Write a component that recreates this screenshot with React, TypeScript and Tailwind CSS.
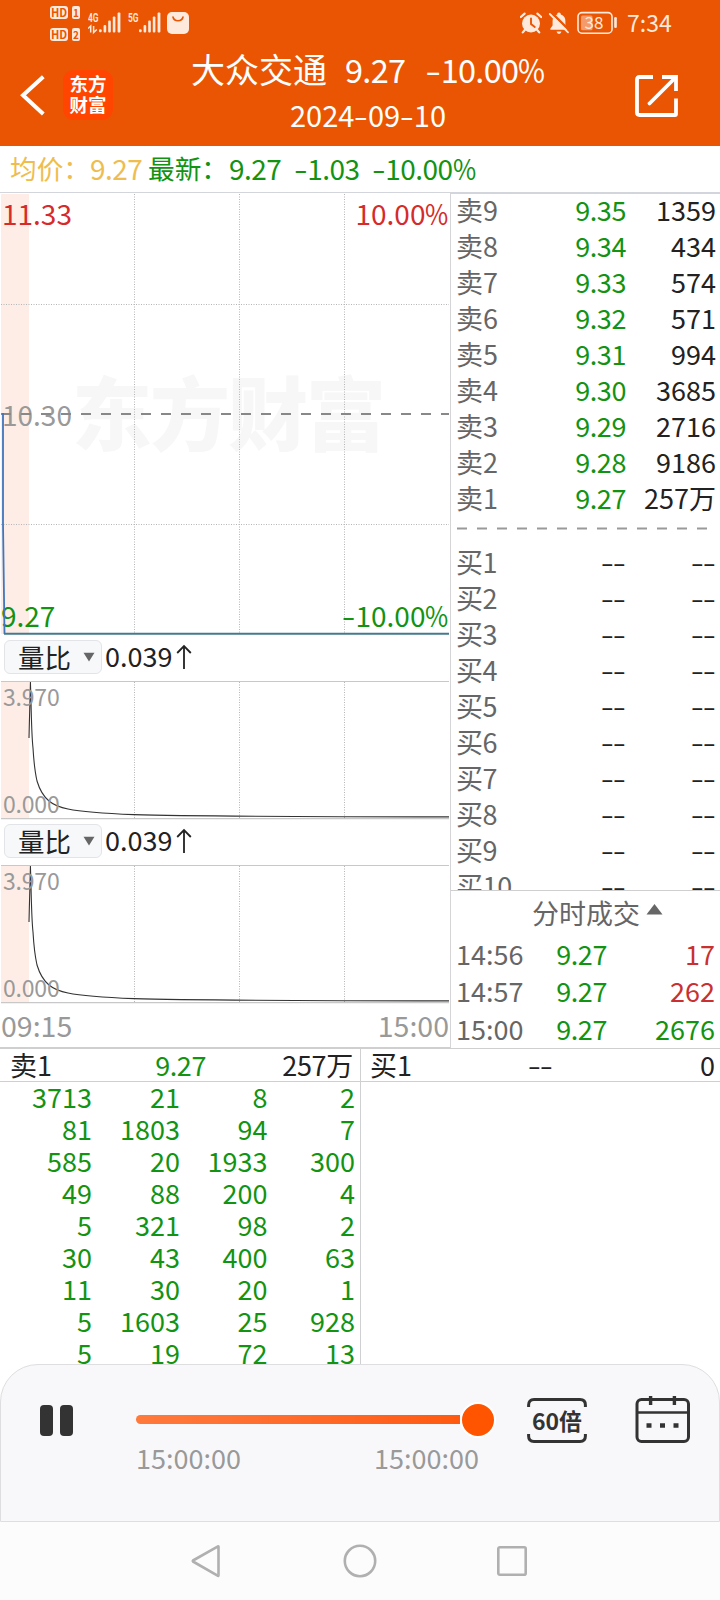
import React from "react";

const sells: [string, string, string][] = [
  ["卖9", "9.35", "1359"],
  ["卖8", "9.34", "434"],
  ["卖7", "9.33", "574"],
  ["卖6", "9.32", "571"],
  ["卖5", "9.31", "994"],
  ["卖4", "9.30", "3685"],
  ["卖3", "9.29", "2716"],
  ["卖2", "9.28", "9186"],
  ["卖1", "9.27", "257万"],
];
const buys = ["买1", "买2", "买3", "买4", "买5", "买6", "买7", "买8", "买9", "买10"];
const trades = [
  { time: "14:56", price: "9.27", qty: "17", tone: "text-[#c9302f]" },
  { time: "14:57", price: "9.27", qty: "262", tone: "text-[#c9302f]" },
  { time: "15:00", price: "9.27", qty: "2676", tone: "text-[#129312]" },
];
const queue = [
  ["3713", "21", "8", "2"],
  ["81", "1803", "94", "7"],
  ["585", "20", "1933", "300"],
  ["49", "88", "200", "4"],
  ["5", "321", "98", "2"],
  ["30", "43", "400", "63"],
  ["11", "30", "20", "1"],
  ["5", "1603", "25", "928"],
  ["5", "19", "72", "13"],
];

function Dash() {
  return <span className="inline-block w-[0.47em] scale-x-[1.4] text-center">-</span>;
}

function Pct() {
  return <span className="-mr-[0.08em] inline-block origin-left scale-x-[0.9]">%</span>;
}

function HdBadge({ n }: { n: string }) {
  return (
    <div className="flex gap-[4px] text-[11px] leading-[13px] font-bold text-[#ea5504]">
      <span className="h-[13px] w-[18px] rounded-[3px] bg-[#fdeadd] text-center">HD</span>
      <span className="h-[13px] w-[8px] rounded-[2px] bg-[#fdeadd] text-center text-[10px]">{n}</span>
    </div>
  );
}

function Signal({ label, arrows }: { label: string; arrows?: boolean }) {
  return (
    <svg width="34" height="24" viewBox="0 0 34 24" fill="#fdeadd">
      <text x="0" y="10.5" fontSize="12" fontWeight="600" textLength="10.5" lengthAdjust="spacingAndGlyphs" fontFamily="Roboto, sans-serif">
        {label}
      </text>
      {arrows && (
        <path d="M0 17.5 L2.7 15 V21.5 M5.6 15 V21.5 L8.8 18.5" fill="none" stroke="#fdeadd" strokeWidth="1.5" />
      )}
      <rect x="11" y="18.3" width="2.6" height="3" rx="1" />
      <rect x="15.6" y="14" width="2.6" height="7.4" rx="1" />
      <rect x="20.2" y="9.5" width="2.6" height="12" rx="1" />
      <rect x="24.8" y="5.5" width="2.6" height="16" rx="1" />
      <rect x="29.6" y="1.5" width="2.8" height="20" rx="1" />
    </svg>
  );
}

function StatusBar() {
  return (
    <div className="flex h-[46px] items-start">
      <div className="ml-[50px] flex w-[38px] flex-col gap-[9px] pt-[6px]">
        <HdBadge n="1" />
        <HdBadge n="2" />
      </div>
      <div className="flex pt-[11px]">
        <Signal label="4G" arrows />
        <div className="ml-[6px]">
          <Signal label="5G" />
        </div>
        <svg className="ml-[5px]" width="22" height="24" viewBox="0 0 22 24">
          <rect x="0" y="1" width="22" height="22" rx="5" fill="#fdeadd" />
          <path d="M6 6 C7 11 15 11 16 6" fill="none" stroke="#ea5504" strokeWidth="1.6" strokeLinecap="round" />
        </svg>
      </div>
      <div className="ml-[331px] flex pt-[11px]">
        <svg width="22" height="24" viewBox="0 0 22 24" fill="none" stroke="#fdeadd">
          <circle cx="11" cy="12.5" r="9" fill="#fdeadd" stroke="none" />
          <path d="M0.8 6 L4.6 2.6 M21.2 6 L17.4 2.6 M4.8 19 L2.8 21.4 M17.2 19 L19.2 21.4" strokeWidth="2.2" strokeLinecap="round" />
          <path d="M11 7.5 V13 L14.8 16" stroke="#ea5504" strokeWidth="1.9" strokeLinecap="round" />
        </svg>
        <svg className="ml-[6px]" width="22" height="24" viewBox="0 0 22 24">
          <path d="M11 1.6 C12.3 1.6 12.8 2.5 12.8 3.4 C16 4.4 17.4 6.6 17.4 10 V14.6 L19.6 17.6 V18.8 H2.4 V17.6 L4.6 14.6 V10 C4.6 6.6 6 4.4 9.2 3.4 C9.2 2.5 9.7 1.6 11 1.6 Z" fill="#fdeadd" />
          <path d="M8.6 20.4 H13.4 C13 22 12.2 22.8 11 22.8 C9.8 22.8 9 22 8.6 20.4Z" fill="#fdeadd" />
          <path d="M3 1.2 L22 20" stroke="#ea5504" strokeWidth="2.4" />
          <path d="M1.8 3 L20 21.4" stroke="#fdeadd" strokeWidth="1.8" strokeLinecap="round" />
        </svg>
        <svg className="ml-[7px]" width="42" height="24" viewBox="0 0 42 24">
          <rect x="1" y="1.6" width="34" height="20.6" rx="4" fill="none" stroke="#fdeadd" strokeWidth="1.6" />
          <rect x="4" y="4.6" width="11.5" height="14.6" rx="1.5" fill="#f49a6b" />
          <rect x="37.2" y="6" width="2.6" height="11" rx="1.2" fill="#fdeadd" />
          <text x="17" y="18" textAnchor="middle" fontSize="17" fill="#fdeadd" fontFamily="'Noto Sans CJK SC', sans-serif">
            38
          </text>
        </svg>
        <span className="ml-[8px] text-[23px] leading-[23px] text-[#fdeadd]">7:34</span>
      </div>
    </div>
  );
}

function Header() {
  return (
    <header className="h-[146px] bg-[#ea5504] text-white">
      <StatusBar />
      <div className="flex h-[100px]">
        <svg className="mt-[29px] ml-[20px]" width="26" height="42" viewBox="0 0 26 42">
          <path d="M23.3 1.8 L3 20.3 L23.3 39" fill="none" stroke="#fff" strokeWidth="4" />
        </svg>
        <div className="mt-[24px] ml-[17px] flex h-[50px] w-[50px] flex-col justify-center rounded-[11px] bg-[#ff4500] pb-[2px] text-center text-[18.5px] leading-[21.5px] font-bold">
          <span>东方</span>
          <span>财富</span>
        </div>
        <div className="ml-[55px] flex w-[400px] flex-col items-center">
          <div className="flex h-[45px] items-center text-[32.5px] leading-[46px] tracking-[-0.7px] whitespace-nowrap">
            <span className="text-[34px] tracking-normal">大众交通</span>
            <span className="ml-[18px]">9.27</span>
            <span className="ml-[20px]">
              <Dash />
              10.00
              <Pct />
            </span>
          </div>
          <div className="h-[45px] text-[29px] leading-[46px]">
            2024
            <Dash />
            09
            <Dash />
            10
          </div>
        </div>
        <svg className="mt-[28px] ml-[66px]" width="44" height="44" viewBox="0 0 44 44" fill="none" stroke="#fff" strokeWidth="3.8">
          <path d="M19 3 H5.5 Q3 3 3 5.5 V38.5 Q3 41 5.5 41 H41 Q42 41 42 40 V24.5" />
          <path d="M28 3 H42 V17" />
          <path d="M15.5 29.5 L41 4" strokeLinecap="round" />
        </svg>
      </div>
    </header>
  );
}

function Grid({ height, rows }: { height: number; rows: number[] }) {
  return (
    <g stroke="#b5b5b5" strokeWidth="1" strokeDasharray="1 1.5">
      {[134.5, 239.5, 344.5].map((x) => (
        <line key={x} x1={x} y1="1" x2={x} y2={height} />
      ))}
      {rows.map((y) => (
        <line key={y} x1="1" y1={y} x2="449" y2={y} />
      ))}
    </g>
  );
}

function PriceChart() {
  return (
    <div className="relative h-[443px] text-[28px] leading-[28px]">
      <svg className="block" width="450" height="443" viewBox="0 0 450 443">
        <rect x="1" y="1" width="28" height="440" fill="#fdede6" />
        <text x="72" y="251" fontSize="80" fontWeight="900" fill="#f7f7f7" textLength="314" fontFamily="'Noto Sans CJK SC', sans-serif">
          东方财富
        </text>
        <Grid height={440} rows={[111.5, 331.5]} />
      </svg>
      <span className="absolute top-[6px] left-[2px] text-[#d52b2b]">11.33</span>
      <span className="absolute top-[6px] right-[1px] text-[#d52b2b]">
        10.00
        <Pct />
      </span>
      <span className="absolute top-[207px] left-[2px] text-[#999]">10.30</span>
      <span className="absolute top-[408px] left-px text-[#129312]">9.27</span>
      <span className="absolute top-[408px] right-[1px] text-[#129312]">
        <Dash />
        10.00
        <Pct />
      </span>
      <svg className="absolute inset-0" width="450" height="443" viewBox="0 0 450 443">
        <line x1="1" y1="221" x2="449" y2="221" stroke="#888" strokeWidth="2" strokeDasharray="10 10" />
        <path d="M3 220 V330 L4.5 441" fill="none" stroke="#3f76bd" strokeWidth="1.8" />
        <path d="M4 440.8 H449" stroke="#437a8d" strokeWidth="2" />
      </svg>
    </div>
  );
}

function Indicator() {
  return (
    <div className="h-[184px]">
      <div className="flex h-[45px] items-start pt-[4px] pl-[4px] text-[#222]">
        <div className="flex h-[34px] w-[98px] items-center rounded-[6px] border border-[#e3e4e8] bg-[#f7f8fa] pl-[13px]">
          <span className="pb-px text-[26.5px] leading-[32px]">量比</span>
          <svg className="ml-[12px]" width="12" height="10" viewBox="0 0 12 10">
            <path d="M0.5 0.8 H11.5 L6 9.5Z" fill="#666" />
          </svg>
        </div>
        <span className="ml-[3px] text-[27px] leading-[31px]">0.039</span>
        <svg className="mt-[4px] ml-[4px]" width="16" height="26" viewBox="0 0 16 26" fill="none" stroke="#222" strokeWidth="1.8">
          <path d="M8 25 V2 M1.2 9 L8 2 L14.8 9" />
        </svg>
      </div>
      <div className="relative h-[139px] text-[23px] leading-[24px] tracking-[-0.2px] text-[#999]">
        <svg className="block" width="450" height="139" viewBox="0 0 450 139">
          <rect x="1" y="0" width="28" height="138" fill="#fdede6" />
          <Grid height={138} rows={[]} />
          <path d="M1 0.5 H449 M1 137.7 H449" stroke="#c8c8c8" strokeWidth="1.2" />
          <path
            d="M29 57 L30.4 1 L31 20 C31.6 50 32 58 33 67 C34 84 34.5 89 37 100 C40 110 43 115 49 120 C55 125 60 126.5 68 128 C82 131 106 132.6 134 133.6 C180 135 260 135.6 449 135.9"
            fill="none"
            stroke="#333"
            strokeWidth="1.1"
          />
        </svg>
        <span className="absolute top-[3px] left-[3px]">3.970</span>
        <span className="absolute top-[110px] left-[3px]">0.000</span>
      </div>
    </div>
  );
}

function OrderBook() {
  return (
    <div className="flex h-[856px] w-[270px] flex-col border-l border-[#d5d5d8] text-[27px] leading-[36px]">
      <div className="h-[698px] overflow-hidden border-t-2 border-[#d3d5dc]">
        <div className="-mt-[2px]">
          {sells.map(([name, price, qty]) => (
            <div key={name} className="flex h-[36px] pr-[4px] pl-[5px]">
              <span className="w-[90px] text-[#666]">{name}</span>
              <span className="w-[80px] text-right tracking-[-0.4px] text-[#129312]">{price}</span>
              <span className="flex-1 text-right text-[#222]">{qty}</span>
            </div>
          ))}
        </div>
        <svg className="block" width="269" height="28" viewBox="0 0 269 28">
          <line x1="6" y1="12.5" x2="257" y2="12.5" stroke="#999" strokeWidth="2" strokeDasharray="10 10" />
        </svg>
        {buys.map((name) => (
          <div key={name} className="flex h-[36px] pr-[4px] pl-[5px]">
            <span className="w-[90px] tracking-[-0.4px] text-[#666]">{name}</span>
            <span className="w-[80px] text-right text-[#222]">
              <Dash />
              <Dash />
            </span>
            <span className="flex-1 text-right text-[#222]">
              <Dash />
              <Dash />
            </span>
          </div>
        ))}
      </div>
      <div className="flex h-[158px] flex-col border-t border-[#cfcfcf]">
        <div className="flex h-[44px] items-center pl-[81px] text-[#666]">
          <span>分时成交</span>
          <svg className="mb-[6px] ml-[6px]" width="17" height="11" viewBox="0 0 17 11">
            <path d="M8.5 0 L16.5 10.5 H0.5Z" fill="#666" />
          </svg>
        </div>
        {trades.map((t) => (
          <div key={t.time} className="flex h-[37.7px] items-center pr-[5px] pl-[5px]">
            <span className="w-[90px] text-[#666]">{t.time}</span>
            <span className="w-[61px] text-right tracking-[-0.4px] text-[#129312]">{t.price}</span>
            <span className={`flex-1 text-right ${t.tone}`}>{t.qty}</span>
          </div>
        ))}
      </div>
    </div>
  );
}

function Queue() {
  return (
    <section className="flex h-[316px] overflow-hidden border-t border-[#cfcfcf] text-[27px] leading-[32px]">
      <div className="w-[361px] border-r border-[#cfd0d2]">
        <div className="flex h-[33px] border-b border-[#cfcfcf] pr-[7px] pl-[10px] text-[#222]">
          <span className="w-[100px]">卖1</span>
          <span className="w-[96px] text-right tracking-[-0.4px] text-[#129312]">9.27</span>
          <span className="flex-1 text-right tracking-[-0.3px]">257万</span>
        </div>
        <div className="-mt-px">
          {queue.map((row, i) => (
            <div key={i} className="grid h-[32px] grid-cols-[92px_88px_87.5px_87.5px] text-right text-[#129312]">
              {row.map((v, j) => (
                <span key={j}>{v}</span>
              ))}
            </div>
          ))}
        </div>
      </div>
      <div className="flex-1">
        <div className="flex h-[33px] border-b border-[#cfcfcf] pr-[5px] pl-[9px] text-[#222]">
          <span className="w-[100px]">买1</span>
          <span className="w-[83px] text-right">
            <Dash />
            <Dash />
          </span>
          <span className="flex-1 text-right">0</span>
        </div>
      </div>
    </section>
  );
}

function Player() {
  return (
    <section className="flex h-[158px] rounded-t-[38px] border border-[#dedee0] bg-[#f8f8fa]">
      <div className="mt-[40px] ml-[39px] flex h-[31px] w-[33px] justify-between">
        <span className="w-[13px] rounded-[4px] bg-[#333]" />
        <span className="w-[13px] rounded-[4px] bg-[#333]" />
      </div>
      <div className="ml-[63px] w-[360px]">
        <div className="mt-[37px] flex h-[35px] items-center">
          <div className="h-[9px] w-[324px] shrink-0 rounded-l-full bg-linear-to-r from-[#ff7a3c] to-[#ff5a0f]" />
          <div className="h-[36px] w-[36px] shrink-0 rounded-full border-2 border-white bg-[#ff5500]" />
        </div>
        <div className="flex w-[343px] justify-between text-[27px] leading-[41px] text-[#999]">
          <span>15:00:00</span>
          <span>15:00:00</span>
        </div>
      </div>
      <svg className="mt-[32px] ml-[31px]" width="60" height="48" viewBox="0 0 60 48">
        <path d="M1.6 10 V8 Q1.6 2.6 7 2.6 H53 Q58.4 2.6 58.4 8 V10 M1.6 37 V39 Q1.6 44.4 7 44.4 H53 Q58.4 44.4 58.4 39 V37" fill="none" stroke="#333" strokeWidth="3" />
        <text x="5" y="33" fontSize="23" fontWeight="700" fill="#333" textLength="50" lengthAdjust="spacingAndGlyphs" fontFamily="'Noto Sans CJK SC', sans-serif">
          60倍
        </text>
      </svg>
      <svg className="mt-[30px] ml-[48px]" width="56" height="50" viewBox="0 0 56 50" fill="none" stroke="#333" strokeWidth="3">
        <rect x="2" y="4.6" width="51.5" height="42" rx="4.5" />
        <path d="M2 17.5 H53.5" strokeWidth="2.6" />
        <path d="M15.6 1 V10 M39.4 1 V10" strokeWidth="3.4" />
        <path d="M11.5 30.5 H16.5 M25 30.5 H30 M38.5 30.5 H43.5" strokeWidth="4.6" />
      </svg>
    </section>
  );
}

export default function App() {
  return (
    <div className="flex h-[1600px] w-[720px] flex-col overflow-hidden bg-white font-['Noto_Sans_CJK_SC',sans-serif]">
      <Header />
      <div className="flex h-[46px] pl-[10px] text-[28px] leading-[44px] tracking-[-0.5px] whitespace-nowrap">
        <span className="w-[80px] text-[26.7px] tracking-normal text-[#efbd4f]">均价：</span>
        <span className="w-[58px] text-[#efbd4f]">9.27</span>
        <span className="w-[81px] text-[26.7px] tracking-normal text-[#129312]">最新：</span>
        <span className="w-[65px] text-[#129312]">9.27</span>
        <span className="w-[78px] text-[#129312]">
          <Dash />
          1.03
        </span>
        <span className="text-[#129312]">
          <Dash />
          10.00
          <Pct />
        </span>
      </div>
      <main className="flex h-[856px]">
        <div className="w-[450px] border-t border-[#d3d5dc]">
          <PriceChart />
          <Indicator />
          <Indicator />
          <div className="flex h-[44px] justify-between border-b border-[#cfcfcf] pr-px pl-px text-[28.5px] leading-[42px] text-[#999]">
            <span>09:15</span>
            <span>15:00</span>
          </div>
        </div>
        <OrderBook />
      </main>
      <Queue />
      <Player />
      <nav className="flex h-[78px] bg-[#fcfcfc]">
        <svg className="mt-[22px] ml-[190px]" width="32" height="34" viewBox="0 0 32 34" fill="none" stroke="#b0b0b0" strokeWidth="2.6" strokeLinejoin="round">
          <path d="M28.5 2.5 V31.5 Q28.5 32 28 31.8 L3 17.5 Q2.5 17 3 16.5 L28 2.3Z" />
        </svg>
        <svg className="mt-[22px] ml-[121px]" width="34" height="34" viewBox="0 0 34 34" fill="none" stroke="#b0b0b0" strokeWidth="2.6">
          <circle cx="17" cy="17" r="15.2" />
        </svg>
        <svg className="mt-[22px] ml-[119px]" width="32" height="34" viewBox="0 0 32 34" fill="none" stroke="#b0b0b0" strokeWidth="2.6">
          <rect x="2.3" y="3.3" width="27.4" height="27.4" rx="1.5" />
        </svg>
      </nav>
    </div>
  );
}
